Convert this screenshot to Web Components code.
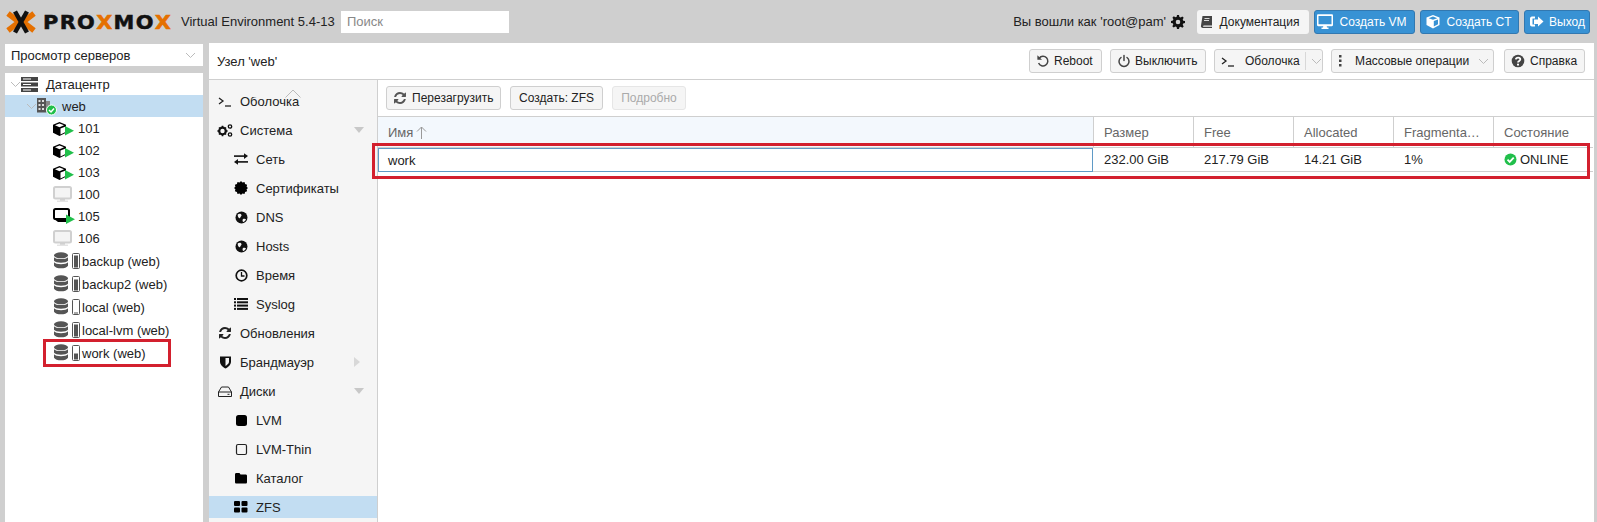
<!DOCTYPE html>
<html>
<head>
<meta charset="utf-8">
<title>Proxmox</title>
<style>
    html, body { margin: 0; height: 100%; overflow: hidden; background: #cfcfcf; }
    body { font: 13px "Liberation Sans", Arial, sans-serif; color: #000; }
</style>
</head>
<body>
<pve-app></pve-app>

<script>
    const ICONS = {
        chevron: '<path d="M1 1l4.500 4.500L10 1" fill="none" stroke="#bbb"/>',
        server: '<g fill="#444"><rect x="0" y="1" width="17" height="4"/><rect x="0" y="6.500" width="17" height="4"/><rect x="0" y="12" width="17" height="4"/></g><g fill="#fff"><rect x="2" y="2.500" width="8" height="1"/><rect x="2" y="8" width="8" height="1"/><rect x="2" y="13.500" width="8" height="1"/></g>',
        node: '<path fill="#555" d="M0 1h9v14.500H0z"/><path fill="#888" d="M9 4h4v11.500H9z"/><g fill="#ddd"><rect x="1.500" y="3" width="2" height="2"/><rect x="5" y="3" width="2" height="2"/><rect x="1.500" y="7" width="2" height="2"/><rect x="5" y="7" width="2" height="2"/><rect x="1.500" y="11" width="2" height="2"/><rect x="5" y="11" width="2" height="2"/></g><circle cx="14.500" cy="13" r="5" fill="#21bf4b" stroke="#fff"/><path d="M12 13l2 2 3-3.500" fill="none" stroke="#fff" stroke-width="1.500"/>',
        ct: '<path d="M6.500 3L0 5.800v8L6.500 17l6.500-3.200v-8z" fill="#000"/><path d="M6.500 4.500L2 6.300l4.500 1.900 4.500-1.900z" fill="#fff"/><path d="M7.500 9.500v6l4.500-2.300V7.700z" fill="#fff"/><path d="M12 7v9.500l9-4.800z" fill="#21bf4b"/>',
        vmoff: '<rect x="1" y="2" width="17" height="11.500" rx="1.500" fill="#f4f4f4" stroke="#d0d0d0" stroke-width="2"/><path d="M7 14h5v2H7z" fill="#d0d0d0"/><path d="M4 15.500h11V17H4z" fill="#e4e4e4"/>',
        vmon: '<rect x="1" y="3" width="15" height="10" rx="1.500" fill="none" stroke="#000" stroke-width="2"/><path d="M1 13h12v3H5z" fill="#000"/><path d="M13 8.500V18l9-4.700z" fill="#21bf4b"/>',
        consoleT: '<path d="M1 2l4 3-4 3" fill="none" stroke="#222" stroke-width="1.300"/><path d="M7 10h6" stroke="#222" stroke-width="1.300"/>',
        cogs: '<circle cx="5.500" cy="8" r="3.300" fill="none" stroke="#111" stroke-width="2.200"/><g stroke="#111" stroke-width="1.600"><path d="M5.500 2.800v1.600M5.500 11.600v1.600M.4 8H2M9 8h1.600M2 4.500l1 1M8 10.500l1 1M9 4.500l-1 1M3 10.500l-1 1"/></g><circle cx="13" cy="3.500" r="1.700" fill="none" stroke="#111" stroke-width="1.300"/><circle cx="13" cy="11.500" r="1.700" fill="none" stroke="#111" stroke-width="1.300"/>',
        exchange: '<g fill="#111"><rect x="0" y="3.300" width="10" height="1.600"/><path d="M10 1.200l4 2.900-4 2.900z"/><rect x="4" y="9.100" width="10" height="1.600"/><path d="M4 7l-4 2.900 4 2.900z"/></g>',
        cert: '<path fill="#000" d="M7 0l1.400 1.500L10.500 1l.6 2 2 .7-.5 2L14 7l-1.400 1.300.5 2-2 .7-.6 2-2.100-.5L7 14l-1.400-1.500-2.100.5-.6-2-2-.7.5-2L0 7l1.400-1.300-.5-2 2-.7.6-2 2.100.5z"/>',
        globe: '<circle cx="6.500" cy="6.500" r="6" fill="#111"/><path d="M3 3.200c1.500-1 3-.6 3.500.7.300 1.100-1 1.600-1.300 2.800-.3 1-1.600.4-2-.6-.4-1-.8-2.200-.2-2.900zM8 8c1-.6 2.400-.4 3 .2-.4 1.300-1.700 2.700-2.900 2.800-.6-.8-.8-2.300-.1-3z" fill="#f5f5f5"/>',
        clock: '<circle cx="6.500" cy="6.500" r="5.300" fill="none" stroke="#111" stroke-width="1.700"/><path d="M6.500 3v4H9.500" fill="none" stroke="#111" stroke-width="1.300"/>',
        list: '<g fill="#111"><rect x="0" y="1" width="2" height="2"/><rect x="0" y="4.300" width="2" height="2"/><rect x="0" y="7.600" width="2" height="2"/><rect x="0" y="10.900" width="2" height="2"/><rect x="3" y="1" width="11" height="2"/><rect x="3" y="4.300" width="11" height="2"/><rect x="3" y="7.600" width="11" height="2"/><rect x="3" y="10.900" width="11" height="2"/></g>',
        refresh: '<path transform="scale(.0078)" fill="currentColor" d="M1639 1056q0 5-1 7-64 268-268 434.500t-478 166.500q-146 0-282.500-55t-243.500-157l-129 129q-19 19-45 19t-45-19-19-45v-448q0-26 19-45t45-19h448q26 0 45 19t19 45-19 45l-137 137q71 66 161 102t187 36q134 0 250-65t186-179q11-17 53-117 8-23 30-23h192q13 0 22.500 9.500t9.500 22.500zm25-800v448q0 26-19 45t-45 19h-448q-26 0-45-19t-19-45 19-45l138-138q-148-137-349-137-134 0-250 65t-186 179q-11 17-53 117-8 23-30 23h-199q-13 0-22.500-9.500t-9.500-22.500v-7q65-268 270-434.500t480-166.500q146 0 284 55.500t245 156.500l130-129q19-19 45-19t45 19 19 45z"/>',
        shield: '<path fill="#111" d="M1 1.500h11v5c0 3.500-2.700 5.500-5.500 7C3.700 12 1 10 1 6.500z"/><path fill="#f5f5f5" d="M6.500 3H10v3.500c0 2-1.600 3.400-3.500 4.500z"/>',
        hdd: '<path d="M3.500 2h7L13.500 7v4.500h-13V7z" fill="none" stroke="#222"/><path d="M.5 7h13" stroke="#222"/><rect x="9.500" y="8.800" width="2" height="1" fill="#222"/>',
        square: '<rect x="1" y="1" width="11" height="11" rx="2.500" fill="#000"/>',
        squareO: '<rect x="1.500" y="1.500" width="10" height="10" rx="1.500" fill="none" stroke="#222" stroke-width="1.200"/>',
        folder: '<path fill="#000" d="M1 3.500C1 2.500 1.500 2 2.500 2h3l1 1.500h5c1 0 1.500.5 1.500 1.500v6c0 1-.5 1.500-1.500 1.500h-9C1.500 12.500 1 12 1 11z"/>',
        th: '<g fill="#000"><rect x="0" y="1" width="6" height="5" rx="1"/><rect x="7.500" y="1" width="6" height="5" rx="1"/><rect x="0" y="7.500" width="6" height="5" rx="1"/><rect x="7.500" y="7.500" width="6" height="5" rx="1"/></g>',
        gear: '<path fill="#111" fill-rule="evenodd" d="M6 0h2l.4 1.900 1.300.5 1.600-1 1.400 1.400-1 1.600.5 1.300 1.900.4v2l-1.900.4-.5 1.300 1 1.600-1.400 1.400-1.600-1-1.300.5L8 14H6l-.4-1.900-1.300-.5-1.600 1-1.400-1.400 1-1.600-.5-1.300L0 8V6l1.900-.4.5-1.300-1-1.600 1.400-1.400 1.600 1 1.300-.5zM7 4.700a2.300 2.300 0 1 0 0 4.600 2.300 2.300 0 0 0 0-4.600z"/>',
        book: '<path fill="#444" d="M3.500 1H13v9.500H5c-1 0-1.300 1-.5 1.300H13V13H4C2.500 13 1.500 12 2 10.500z"/><path stroke="#fff" stroke-width=".8" d="M5.500 3.500h5M5 5.500h5"/>',
        desktop: '<path fill="#fff" d="M0 1.500C0 .8.500.3 1.200.3h13.600c.7 0 1.200.5 1.200 1.200V11c0 .7-.5 1.200-1.200 1.200H1.200C.5 12.200 0 11.700 0 11zM1.500 2v8.300h13V2z"/><path fill="#fff" d="M6.300 12h3.400l.3 1.500h1.500V15H4.500v-1.500H6z"/>',
        cube: '<path fill="#fff" d="M7 0L.5 2.500V10L7 13.500l6.500-3.500V2.500zM7 1.600l4.300 1.600L7 4.800 2.700 3.200zM7.800 6l4.200-1.600v4.800l-4.200 2.300z"/>',
        signout: '<path fill="#fff" d="M1 3.500c0-1 .8-2 2-2h3v2H3.500v6H6v2H3c-1.200 0-2-1-2-2z"/><path fill="#fff" d="M9 1.500l5.500 5-5.500 5V9H5V4.500h4z"/>',
        reboot: '<path fill="none" stroke="#444" stroke-width="1.500" d="M3.200 4.200a4.800 4.800 0 1 1-.6 4.800"/><path fill="#444" d="M1.400 1.200v4.600H6z"/>',
        power: '<path fill="none" stroke="#444" stroke-width="1.500" stroke-linecap="round" d="M7 1.500v5M4 3.500a5 5 0 1 0 6 0"/>',
        dots: '<g fill="#444"><rect x="1" y="1" width="2.500" height="2.500"/><rect x="1" y="5.500" width="2.500" height="2.500"/><rect x="1" y="10" width="2.500" height="2.500"/></g>',
        help: '<circle cx="7" cy="7" r="6.300" fill="#444"/><path fill="none" stroke="#fff" stroke-width="1.800" d="M4.800 5.300c.3-2.300 4.500-2.300 4.500 0 0 1.700-2.300 1.500-2.300 3.200"/><rect x="6" y="9.700" width="2" height="1.800" fill="#fff"/>',
        ok: '<circle cx="6.500" cy="6.500" r="6" fill="#21bf4b"/><path d="M3.500 6.700l2.200 2.200 4-4.200" fill="none" stroke="#fff" stroke-width="1.800"/>'
    }

    // [width, height] of the viewBox for each icon
    const ICON_SIZE = {
        chevron: [11, 7], server: [17, 17], node: [20, 19], ct: [21, 18], vmoff: [19, 18], vmon: [23, 21],
        consoleT: [14, 11], cogs: [16, 15], exchange: [14, 14], cert: [14, 14], globe: [13, 13], clock: [13, 13],
        list: [14, 14], refresh: [14, 14], shield: [13, 14], hdd: [14, 13], square: [13, 13], squareO: [13, 13],
        folder: [14, 14], th: [14, 14], gear: [14, 14], book: [14, 14], desktop: [16, 15], cube: [14, 14],
        signout: [15, 13], reboot: [14, 14], power: [14, 14], dots: [5, 14], help: [14, 14], ok: [13, 13]
    }

    customElements.define('pve-icon', class PveIcon extends HTMLElement {
        constructor() {
            super()
            this.attachShadow({mode: 'open'})
        }

        connectedCallback() {
            const name = this.getAttribute('name')
            const size = ICON_SIZE[name]
            this.shadowRoot.innerHTML = `
                <style>
                    :host { display: inline-flex; flex: none; }
                    svg { display: block; }
                </style>
                <svg width="${size[0]}" height="${size[1]}" viewBox="0 0 ${size[0]} ${size[1]}">${ICONS[name]}</svg>`
        }
    })

    // disk with a little fill gauge next to it, used by storage rows of the tree
    customElements.define('pve-storage-icon', class PveStorageIcon extends HTMLElement {
        constructor() {
            super()
            const fill = Number(this.getAttribute('fill'))
            const top = 15.5 - fill
            this.attachShadow({mode: 'open'}).innerHTML = `
                <style>
                    :host { display: inline-flex; flex: none; }
                    svg { display: block; }
                </style>
                <svg width="26" height="19" viewBox="0 0 26 19">
                    <g fill="#555">
                        <ellipse cx="7" cy="3.300" rx="7" ry="3"/>
                        <path d="M0 5.200c1.500 2.500 12.500 2.500 14 0v3.600c-1.500 2.500-12.500 2.500-14 0z"/>
                        <path d="M0 10.300c1.500 2.500 12.500 2.500 14 0v3.400c-1.500 3.400-12.500 3.400-14 0z"/>
                    </g>
                    <rect x="18.500" y="1.500" width="7" height="15" rx="1" fill="#fff" stroke="#555"/>
                    <rect x="20" y="${top}" width="4" height="${fill}" fill="#555"/>
                </svg>`
        }
    })

    customElements.define('pve-button', class PveButton extends HTMLElement {
        constructor() {
            super()
            this.attachShadow({mode: 'open'}).innerHTML = `
                <style>
                    :host {
                        display: inline-flex;
                        align-items: center;
                        box-sizing: border-box;
                        height: 24px;
                        padding: 0 6px;
                        gap: 7px;
                        flex: none;
                        white-space: nowrap;
                        font-size: 12px;
                        color: #222;
                        background: #f5f5f5;
                        border: 1px solid #cfcfcf;
                        border-radius: 3px;
                    }
                    :host([blue]) {
                        color: #fff;
                        background: #3892d4;
                        border-color: #3278b0;
                    }
                    :host([plain]) { border-color: transparent; }
                    :host([disabled]) { color: #aaa; border-color: #e6e6e6; }
                </style>
                <slot></slot>`
        }
    })

    customElements.define('pve-header', class PveHeader extends HTMLElement {
        constructor() {
            super()
            this.attachShadow({mode: 'open'}).innerHTML = `
                <style>
                    :host {
                        display: flex;
                        align-items: center;
                        height: 43px;
                        box-sizing: border-box;
                        padding: 0 7px 0 6px;
                        font-size: 13px;
                        color: #222;
                    }
                    .logo { display: flex; align-items: center; width: 175px; flex: none; }
                    .word {
                        font: bold 19px "DejaVu Sans", sans-serif;
                        letter-spacing: 1.2px;
                        margin-left: 7px;
                        color: #111;
                        -webkit-text-stroke: .5px #111;
                        transform: scaleX(1.1);
                        transform-origin: left center;
                    }
                    .word b { color: #e57000; -webkit-text-stroke-color: #e57000; }
                    .ver { width: 160px; flex: none; }
                    input {
                        box-sizing: border-box;
                        width: 168px;
                        height: 22px;
                        border: 0;
                        padding: 0 6px;
                        font: 13px "Liberation Sans", sans-serif;
                        background: #fff;
                    }
                    input::placeholder { color: #888; opacity: 1; }
                    .right { margin-left: auto; display: flex; align-items: center; gap: 5px; }
                    .user { display: flex; align-items: center; gap: 5px; margin-right: 7px; }
                </style>
                <div class="logo">
                    <svg width="30" height="24" viewBox="0 0 30 24" style="flex:none">
                        <path d="M2 3.500L13 12 2 20.500M28 3.500L17 12l11 8.500" fill="none" stroke="#e57000" stroke-width="5.500"/>
                        <path d="M9 1.500l12 21M21 1.500l-12 21" fill="none" stroke="#111" stroke-width="4.500"/>
                    </svg>
                    <span class="word">PRO<b>X</b>MO<b>X</b></span>
                </div>
                <span class="ver">Virtual Environment 5.4-13</span>
                <input placeholder="Поиск">
                <div class="right">
                    <span class="user">Вы вошли как 'root@pam' <pve-icon name="gear"></pve-icon></span>
                    <slot></slot>
                </div>`
        }
    })

    customElements.define('pve-tree-row', class PveTreeRow extends HTMLElement {
        constructor() {
            super()
            this.attachShadow({mode: 'open'}).innerHTML = `
                <style>
                    :host {
                        display: flex;
                        align-items: center;
                        height: 22px;
                        color: #222;
                    }
                    :host([tall]) { height: 23px; }
                    :host([selected]) { background: #c2ddf2; }
                </style>
                <slot></slot>`
        }

        connectedCallback() {
            this.style.paddingLeft = (this.getAttribute('indent') || 0) + 'px'
            this.style.gap = (this.getAttribute('gap') || 0) + 'px'
        }
    })

    customElements.define('pve-menu-row', class PveMenuRow extends HTMLElement {
        constructor() {
            super()
            this.attachShadow({mode: 'open'}).innerHTML = `
                <style>
                    :host {
                        display: flex;
                        align-items: center;
                        height: 22px;
                        margin-bottom: 7px;
                        color: #222;
                    }
                    :host([selected]) { background: #c2ddf2; }
                    .ic { width: 16px; display: flex; justify-content: center; flex: none; margin-right: 7px; }
                    .text { flex: 1; }
                    .arrow { width: 0; height: 0; margin-right: 15px; }
                    :host([arrow="down"]) .arrow { border: 5px solid transparent; border-top: 6px solid #c8c8c8; border-bottom: 0; margin-right: 13px; }
                    :host([arrow="right"]) .arrow { border: 5px solid transparent; border-left: 6px solid #d8d8d8; border-right: 0; margin-right: 17px; }
                </style>
                <span class="ic"><slot name="icon"></slot></span>
                <span class="text"><slot></slot></span>
                <span class="arrow"></span>`
        }

        connectedCallback() {
            this.style.paddingLeft = (this.hasAttribute('sub') ? 24 : 8) + 'px'
        }
    })

    customElements.define('pve-menu', class PveMenu extends HTMLElement {
        constructor() {
            super()
            this.attachShadow({mode: 'open'}).innerHTML = `
                <style>
                    :host {
                        display: flex;
                        flex-direction: column;
                        width: 169px;
                        flex: none;
                        box-sizing: border-box;
                        background: #f5f5f5;
                        border-right: 1px solid #cfcfcf;
                        overflow: hidden;
                    }
                    .scroller { height: 17px; flex: none; position: relative; z-index: 1; background: #f5f5f5; display: flex; justify-content: center; align-items: flex-end; }
                    .list { margin-top: -7px; }
                </style>
                <div class="scroller">
                    <svg width="16" height="9" viewBox="0 0 16 9" style="margin-bottom:-1px"><path d="M.5 8.500L8 1l7.500 7.500" fill="none" stroke="#bbb"/></svg>
                </div>
                <div class="list"><slot></slot></div>`
        }
    })

    customElements.define('pve-grid', class PveGrid extends HTMLElement {
        constructor() {
            super()
            this.attachShadow({mode: 'open'}).innerHTML = `
                <style>
                    :host { display: block; flex: 1; min-width: 0; background: #fff; font-size: 13px; }
                    .toolbar {
                        display: flex;
                        gap: 9px;
                        align-items: center;
                        height: 37px;
                        box-sizing: border-box;
                        padding: 0 8px;
                        border-bottom: 1px solid #cfcfcf;
                    }
                    .cols {
                        display: grid;
                        grid-template-columns: 715px repeat(5, 100px);
                    }
                    .head {
                        height: 31px;
                        box-sizing: border-box;
                        padding-left: 10px;
                        display: flex;
                        align-items: center;
                        color: #666;
                        border-bottom: 1px solid #cfcfcf;
                        border-left: 1px solid #cfcfcf;
                        overflow: hidden;
                        white-space: nowrap;
                    }
                    .head.sorted { background: #f3f8fd; border-left: 0; gap: 3px; }
                    .cell {
                        height: 24px;
                        box-sizing: border-box;
                        padding-left: 11px;
                        display: flex;
                        align-items: center;
                        gap: 3px;
                        color: #222;
                        border-bottom: 1px solid #cfcfcf;
                        white-space: nowrap;
                    }
                    .cell.focus { border: 1px solid #5f9ac6; padding-left: 9px; }
                </style>
                <div class="toolbar">
                    <pve-button style="width:115px;gap:5px"><pve-icon name="refresh" style="color:#555"></pve-icon>Перезагрузить</pve-button>
                    <pve-button style="width:93px;justify-content:center">Создать: ZFS</pve-button>
                    <pve-button disabled style="width:74px;justify-content:center">Подробно</pve-button>
                </div>
                <div class="cols">
                    <div class="head sorted">Имя <svg width="11" height="13" viewBox="0 0 11 13"><path d="M5.500 13V1M1 5.500L5.500 1 10 5.500" fill="none" stroke="#999"/></svg></div>
                    <div class="head">Размер</div>
                    <div class="head">Free</div>
                    <div class="head">Allocated</div>
                    <div class="head">Fragmenta…</div>
                    <div class="head">Состояние</div>
                    <div class="cell focus">work</div>
                    <div class="cell">232.00 GiB</div>
                    <div class="cell">217.79 GiB</div>
                    <div class="cell">14.21 GiB</div>
                    <div class="cell">1%</div>
                    <div class="cell"><pve-icon name="ok"></pve-icon>ONLINE</div>
                </div>`
        }
    })

    customElements.define('pve-mark', class PveMark extends HTMLElement {
        constructor() {
            super()
            this.attachShadow({mode: 'open'}).innerHTML = `
                <style>
                    :host {
                        position: absolute;
                        box-sizing: border-box;
                        border: 3px solid #d3202e;
                        pointer-events: none;
                    }
                </style>`
        }
    })

    customElements.define('pve-app', class PveApp extends HTMLElement {
        constructor() {
            super()
            this.attachShadow({mode: 'open'}).innerHTML = `
                <style>
                    :host {
                        display: flex;
                        flex-direction: column;
                        height: 522px;
                        position: relative;
                        overflow: hidden;
                        background: #cfcfcf;
                        font: 13px "Liberation Sans", sans-serif;
                    }
                    .body { display: flex; flex: 1; min-height: 0; padding-left: 5px; gap: 6px; }
                    .side { width: 198px; flex: none; display: flex; flex-direction: column; gap: 7px; padding-top: 1px; }
                    .select {
                        height: 22px;
                        flex: none;
                        background: #fff;
                        display: flex;
                        align-items: center;
                        justify-content: space-between;
                        padding: 0 7px 0 6px;
                        color: #222;
                    }
                    .tree { flex: 1; background: #fff; }
                    .main { flex: 1; min-width: 0; display: flex; flex-direction: column; background: #fff; margin-right: 3px; }
                    .title {
                        height: 37px;
                        flex: none;
                        box-sizing: border-box;
                        display: flex;
                        align-items: center;
                        padding: 0 9px 0 8px;
                        border-bottom: 1px solid #cfcfcf;
                        color: #222;
                    }
                    .tools { margin-left: auto; display: flex; gap: 8px; }
                    .sep { border-left: 1px solid #d8d8d8; height: 18px; }
                    .split { display: flex; flex: 1; min-height: 0; }
                </style>
                <pve-header>
                    <pve-button plain style="width:112px;padding-right:14px;justify-content:center"><pve-icon name="book"></pve-icon>Документация</pve-button>
                    <pve-button blue style="width:101px;padding-right:12px;justify-content:center"><pve-icon name="desktop"></pve-icon>Создать VM</pve-button>
                    <pve-button blue style="width:99px;padding-right:8px;justify-content:center"><pve-icon name="cube"></pve-icon>Создать CT</pve-button>
                    <pve-button blue style="width:66px;justify-content:center;gap:5px;padding:0 3px"><pve-icon name="signout"></pve-icon>Выход</pve-button>
                </pve-header>
                <div class="body">
                    <div class="side">
                        <div class="select">Просмотр серверов <pve-icon name="chevron"></pve-icon></div>
                        <div class="tree">
                            <pve-tree-row indent="5"><pve-icon name="chevron"></pve-icon><pve-icon name="server"></pve-icon><span style="margin-left:8px">Датацентр</span></pve-tree-row>
                            <pve-tree-row indent="21" selected><pve-icon name="chevron"></pve-icon><pve-icon name="node"></pve-icon><span style="margin-left:5px">web</span></pve-tree-row>
                            <pve-tree-row indent="48" gap="4"><pve-icon name="ct"></pve-icon>101</pve-tree-row>
                            <pve-tree-row indent="48" gap="4"><pve-icon name="ct"></pve-icon>102</pve-tree-row>
                            <pve-tree-row indent="48" gap="4"><pve-icon name="ct"></pve-icon>103</pve-tree-row>
                            <pve-tree-row indent="48" gap="6"><pve-icon name="vmoff"></pve-icon>100</pve-tree-row>
                            <pve-tree-row indent="48" gap="2"><pve-icon name="vmon"></pve-icon>105</pve-tree-row>
                            <pve-tree-row indent="48" gap="6"><pve-icon name="vmoff"></pve-icon>106</pve-tree-row>
                            <pve-tree-row tall indent="49" gap="2" style="margin-top:1px"><pve-storage-icon fill="12"></pve-storage-icon>backup (web)</pve-tree-row>
                            <pve-tree-row tall indent="49" gap="2"><pve-storage-icon fill="11"></pve-storage-icon>backup2 (web)</pve-tree-row>
                            <pve-tree-row tall indent="49" gap="2"><pve-storage-icon fill="1"></pve-storage-icon>local (web)</pve-tree-row>
                            <pve-tree-row tall indent="49" gap="2"><pve-storage-icon fill="12"></pve-storage-icon>local-lvm (web)</pve-tree-row>
                            <pve-tree-row tall indent="49" gap="2"><pve-storage-icon fill="6"></pve-storage-icon>work (web)</pve-tree-row>
                        </div>
                    </div>
                    <div class="main">
                        <div class="title">
                            Узел 'web'
                            <div class="tools">
                                <pve-button style="width:73px;gap:4px"><pve-icon name="reboot"></pve-icon>Reboot</pve-button>
                                <pve-button style="width:96px;gap:4px"><pve-icon name="power"></pve-icon>Выключить</pve-button>
                                <pve-button style="width:109px;gap:5px"><pve-icon name="consoleT"></pve-icon><span style="margin-left:5px">Оболочка</span><span class="sep"></span><pve-icon name="chevron"></pve-icon></pve-button>
                                <pve-button style="width:163px;gap:12px"><pve-icon name="dots"></pve-icon>Массовые операции<pve-icon name="chevron" style="margin-left:-3px"></pve-icon></pve-button>
                                <pve-button style="width:81px;gap:5px;margin-left:2px"><pve-icon name="help"></pve-icon>Справка</pve-button>
                            </div>
                        </div>
                        <div class="split">
                            <pve-menu>
                                <pve-menu-row><pve-icon slot="icon" name="consoleT"></pve-icon>Оболочка</pve-menu-row>
                                <pve-menu-row arrow="down"><pve-icon slot="icon" name="cogs"></pve-icon>Система</pve-menu-row>
                                <pve-menu-row sub><pve-icon slot="icon" name="exchange"></pve-icon>Сеть</pve-menu-row>
                                <pve-menu-row sub><pve-icon slot="icon" name="cert"></pve-icon>Сертификаты</pve-menu-row>
                                <pve-menu-row sub><pve-icon slot="icon" name="globe"></pve-icon>DNS</pve-menu-row>
                                <pve-menu-row sub><pve-icon slot="icon" name="globe"></pve-icon>Hosts</pve-menu-row>
                                <pve-menu-row sub><pve-icon slot="icon" name="clock"></pve-icon>Время</pve-menu-row>
                                <pve-menu-row sub><pve-icon slot="icon" name="list"></pve-icon>Syslog</pve-menu-row>
                                <pve-menu-row><pve-icon slot="icon" name="refresh"></pve-icon>Обновления</pve-menu-row>
                                <pve-menu-row arrow="right"><pve-icon slot="icon" name="shield"></pve-icon>Брандмауэр</pve-menu-row>
                                <pve-menu-row arrow="down"><pve-icon slot="icon" name="hdd"></pve-icon>Диски</pve-menu-row>
                                <pve-menu-row sub><pve-icon slot="icon" name="square"></pve-icon>LVM</pve-menu-row>
                                <pve-menu-row sub><pve-icon slot="icon" name="squareO"></pve-icon>LVM-Thin</pve-menu-row>
                                <pve-menu-row sub><pve-icon slot="icon" name="folder"></pve-icon>Каталог</pve-menu-row>
                                <pve-menu-row sub selected><pve-icon slot="icon" name="th"></pve-icon>ZFS</pve-menu-row>
                            </pve-menu>
                            <pve-grid></pve-grid>
                        </div>
                    </div>
                </div>
                <pve-mark style="left:43px;top:339px;width:128px;height:28px"></pve-mark>
                <pve-mark style="left:372px;top:143px;width:1218px;height:36px"></pve-mark>`
        }
    })
</script>
</body>
</html>
